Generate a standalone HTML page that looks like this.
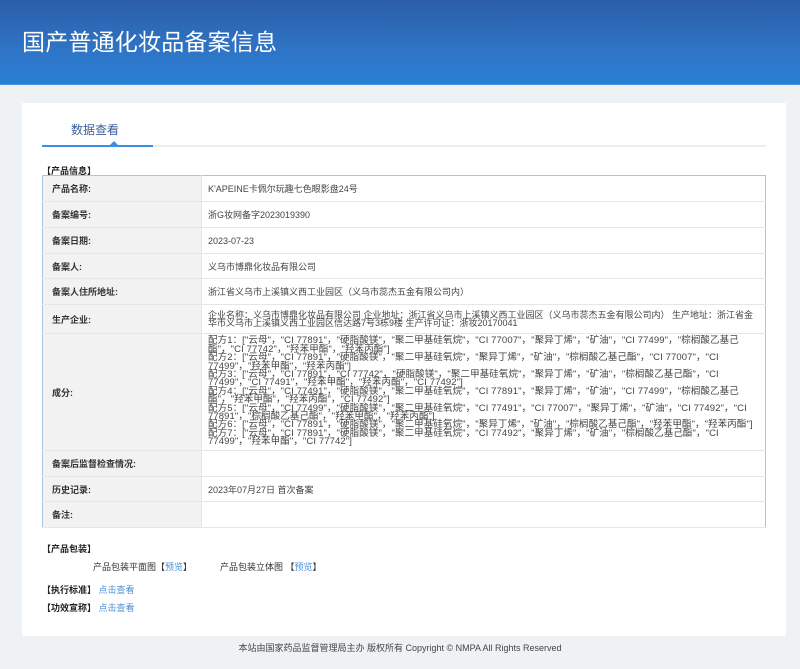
<!DOCTYPE html>
<html><head><meta charset="utf-8"><style>
*{margin:0;padding:0;box-sizing:border-box}
body{width:800px;height:669px;background:#eff2f5;font-family:"Liberation Sans","Noto Sans CJK SC",sans-serif;font-size:9px;color:#333;position:relative;overflow:hidden}
.hd{position:absolute;left:0;top:0;width:800px;height:85px;background:linear-gradient(180deg,#2b5ea8 0%,#2f74c6 60%,#2a7fd4 100%);border-bottom:1px solid #4a93e0}
.hd h1{position:absolute;left:22px;top:23px;font-size:23px;font-weight:normal;color:#fff;letter-spacing:0.2px}
.card{position:absolute;left:22px;top:103px;width:764px;height:533px;background:#fff}
.tab{position:absolute;left:49px;top:18px;font-size:12px;color:#3a5f9a}
.tl{position:absolute;left:20px;top:42px;width:724px;height:2px;background:#eee}
.tl2{position:absolute;left:20px;top:42px;width:111px;height:2px;background:#3d8fe0}
.tri{position:absolute;left:88px;top:38px;width:0;height:0;border-left:4px solid transparent;border-right:4px solid transparent;border-bottom:4px solid #3d8fe0}
.sec{position:absolute;font-weight:bold;font-size:9px;color:#222}
table{position:absolute;left:20px;top:72px;width:724px;border-collapse:collapse;border:1px solid #a9c4e8}
td{border-bottom:1px solid #e6e6e6;vertical-align:middle;padding:0 9px}
td.l{width:159px;background:#f2f2f2;font-weight:bold;color:#333;border-right:1px solid #e6e6e6}
td.v{padding-left:6px;color:#444}
.ing{font-size:9.5px;line-height:8.4px;letter-spacing:0.1px}
a{color:#4a8fd6;text-decoration:none}
.ft{position:absolute;left:0;top:641px;width:800px;text-align:center;font-size:9px;color:#444}
</style></head><body>
<div class="hd"><h1>国产普通化妆品备案信息</h1></div>
<div class="card">
<div class="tab">数据查看</div>
<div class="tl"></div><div class="tl2"></div><div class="tri"></div>
<div class="sec" style="left:20px;top:61px">【产品信息】</div>
<table>
<tr style="height:26px"><td class="l">产品名称:</td><td class="v">K'APEINE卡佩尔玩趣七色眼影盘24号</td></tr>
<tr style="height:26px"><td class="l">备案编号:</td><td class="v">浙G妆网备字2023019390</td></tr>
<tr style="height:26px"><td class="l">备案日期:</td><td class="v">2023-07-23</td></tr>
<tr style="height:25px"><td class="l">备案人:</td><td class="v">义乌市博鼎化妆品有限公司</td></tr>
<tr style="height:26px"><td class="l">备案人住所地址:</td><td class="v">浙江省义乌市上溪镇义西工业园区（义乌市蕊杰五金有限公司内）</td></tr>
<tr style="height:29px"><td class="l">生产企业:</td><td class="v" style="line-height:8.5px">企业名称：义乌市博鼎化妆品有限公司 企业地址：浙江省义乌市上溪镇义西工业园区（义乌市蕊杰五金有限公司内） 生产地址：浙江省金华市义乌市上溪镇义西工业园区信达路7号3栋9楼 生产许可证：浙妆20170041</td></tr>
<tr style="height:117px"><td class="l">成分:</td><td class="v ing">配方1：["云母"，"CI 77891"，"硬脂酸镁"，"聚二甲基硅氧烷"，"CI 77007"，"聚异丁烯"，"矿油"，"CI 77499"，"棕榈酸乙基己酯"，"CI 77742"，"羟苯甲酯"，"羟苯丙酯"]<br>配方2：["云母"，"CI 77891"，"硬脂酸镁"，"聚二甲基硅氧烷"，"聚异丁烯"，"矿油"，"棕榈酸乙基己酯"，"CI 77007"，"CI 77499"，"羟苯甲酯"，"羟苯丙酯"]<br>配方3：["云母"，"CI 77891"，"CI 77742"，"硬脂酸镁"，"聚二甲基硅氧烷"，"聚异丁烯"，"矿油"，"棕榈酸乙基己酯"，"CI 77499"，"CI 77491"，"羟苯甲酯"，"羟苯丙酯"，"CI 77492"]<br>配方4：["云母"，"CI 77491"，"硬脂酸镁"，"聚二甲基硅氧烷"，"CI 77891"，"聚异丁烯"，"矿油"，"CI 77499"，"棕榈酸乙基己酯"，"羟苯甲酯"，"羟苯丙酯"，"CI 77492"]<br>配方5：["云母"，"CI 77499"，"硬脂酸镁"，"聚二甲基硅氧烷"，"CI 77491"，"CI 77007"，"聚异丁烯"，"矿油"，"CI 77492"，"CI 77891"，"棕榈酸乙基己酯"，"羟苯甲酯"，"羟苯丙酯"]<br>配方6：["云母"，"CI 77891"，"硬脂酸镁"，"聚二甲基硅氧烷"，"聚异丁烯"，"矿油"，"棕榈酸乙基己酯"，"羟苯甲酯"，"羟苯丙酯"]<br>配方7：["云母"，"CI 77891"，"硬脂酸镁"，"聚二甲基硅氧烷"，"CI 77492"，"聚异丁烯"，"矿油"，"棕榈酸乙基己酯"，"CI 77499"，"羟苯甲酯"，"CI 77742"]</td></tr>
<tr style="height:26px"><td class="l">备案后监督检查情况:</td><td class="v"></td></tr>
<tr style="height:25px"><td class="l">历史记录:</td><td class="v">2023年07月27日 首次备案</td></tr>
<tr style="height:26px"><td class="l">备注:</td><td class="v"></td></tr>
</table>
<div class="sec" style="left:20px;top:439px">【产品包装】</div>
<div style="position:absolute;left:71px;top:457px">产品包装平面图【<a>预览</a>】</div>
<div style="position:absolute;left:198px;top:457px">产品包装立体图 【<a>预览</a>】</div>
<div class="sec" style="left:20px;top:480px">【执行标准】 <a style="font-weight:normal">点击查看</a></div>
<div class="sec" style="left:20px;top:498px">【功效宣称】 <a style="font-weight:normal">点击查看</a></div>
</div>
<div class="ft">本站由国家药品监督管理局主办 版权所有 Copyright © NMPA All Rights Reserved</div>
</body></html>
